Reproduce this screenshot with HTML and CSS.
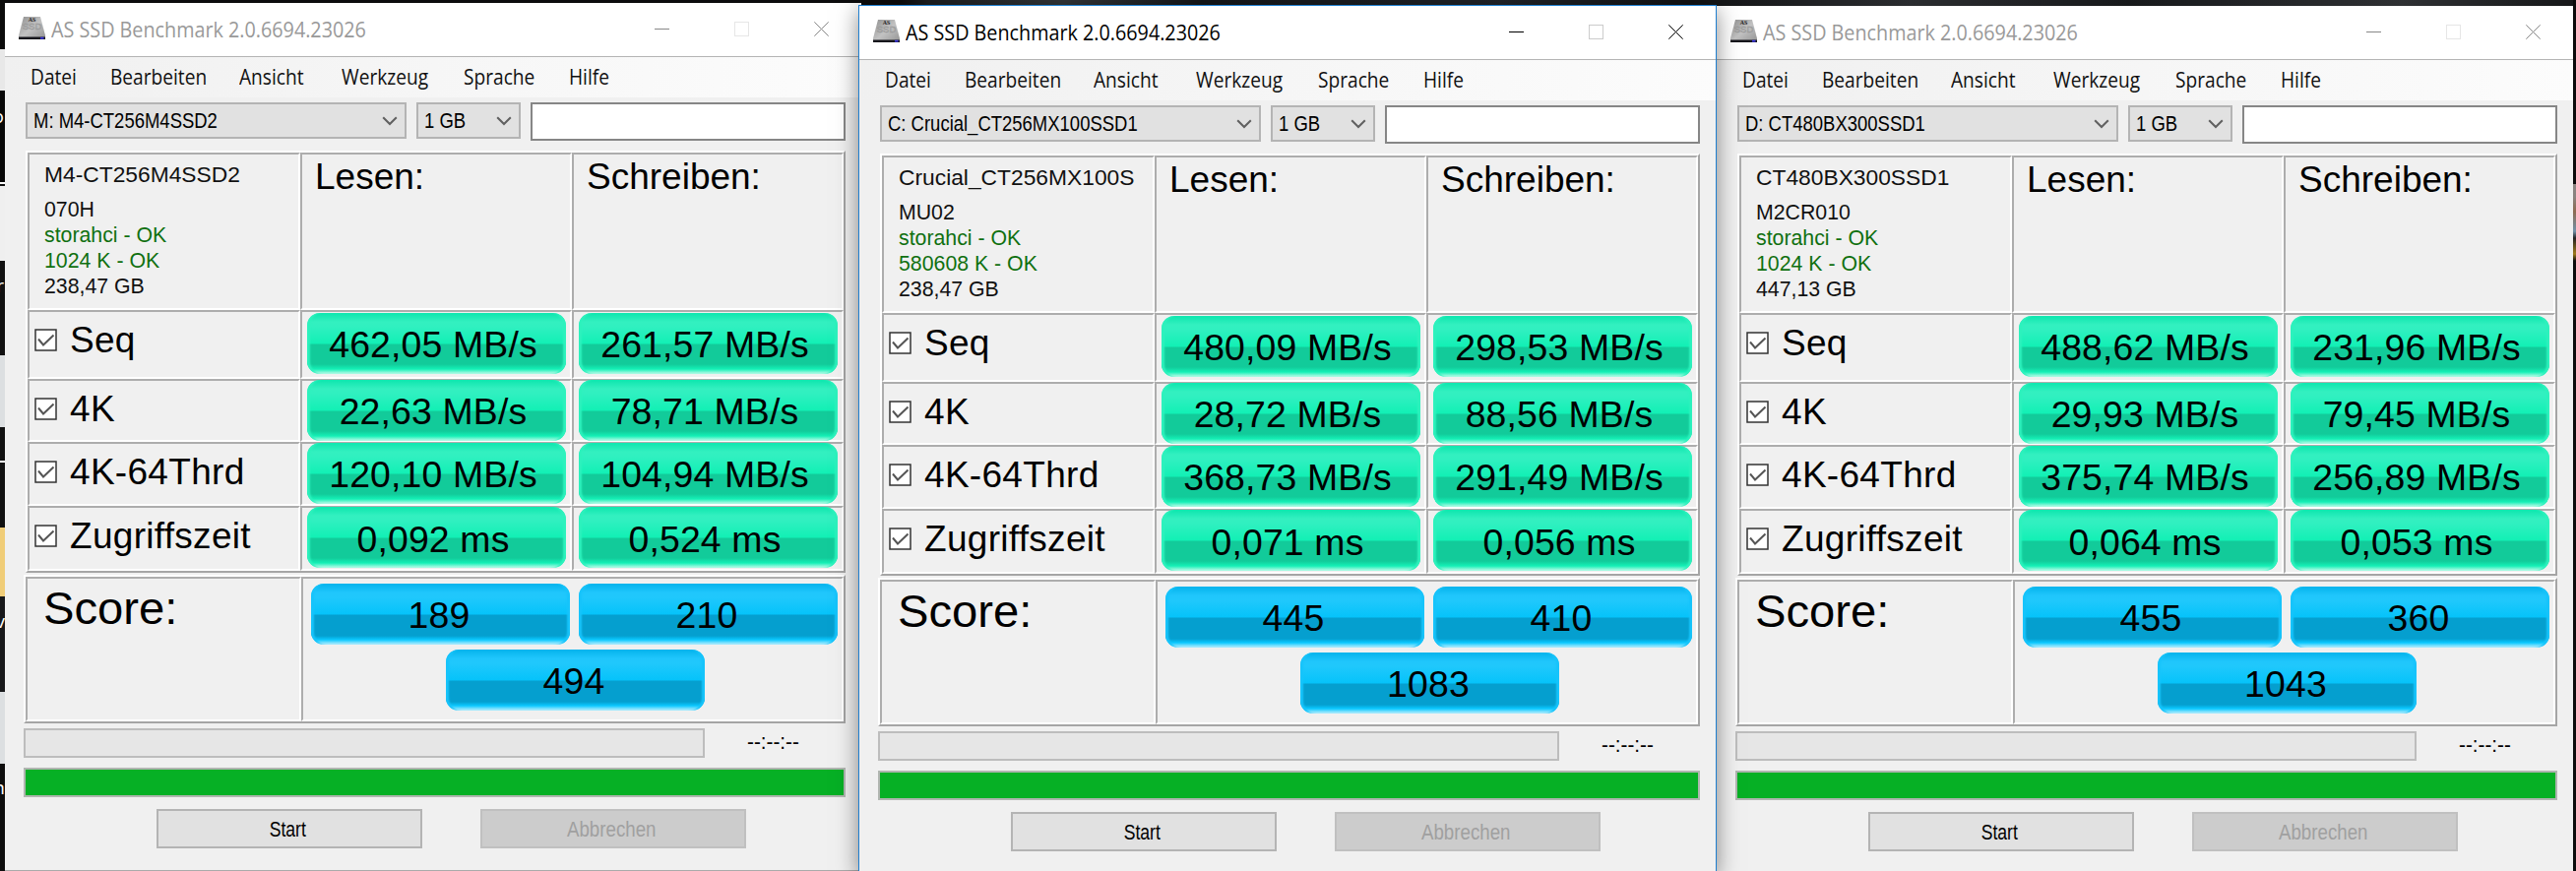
FILE: index.html
```html
<!DOCTYPE html>
<html lang="de">
<head>
<meta charset="utf-8">
<title>AS SSD Benchmark</title>
<link rel="stylesheet" href="styles.css">
</head>
<body>
<svg class="defs" width="0" height="0">
  <defs>
    <linearGradient id="metal" x1="0" y1="0" x2="1" y2="1"><stop offset="0" stop-color="#8f8f8f"/><stop offset=".5" stop-color="#c2c2c2"/><stop offset="1" stop-color="#929292"/></linearGradient>
    <symbol id="drive" viewBox="0 0 27 23">
      <path d="M5 0H22L27 19V23H0V19Z" fill="url(#metal)"/>
      <path d="M0 20.500H27V23H0Z" fill="#17171c"/><path d="M22 20.800h3.500v1.800H22z" fill="#3a35e0"/>
      <text x="13.500" y="4.500" class="drive-as">AS</text><text x="13.500" y="13" class="drive-ssd">SSD</text>
    </symbol>
    <symbol id="chevron" viewBox="0 0 16 10"><path d="M1.200 1.200L8 8L14.800 1.200" fill="none" stroke="#606060" stroke-width="2"/></symbol>
    <symbol id="check" viewBox="0 0 23 23"><rect x="1" y="1" width="21" height="21" fill="#fff" stroke="#333" stroke-width="1.500"/><path d="M4 10.500L9 16.500L19.500 6.500" fill="none" stroke="#555" stroke-width="2"/></symbol>
    <symbol id="controls" viewBox="0 0 182 15"><path class="c-min" d="M0 7.500H15"/><rect class="c-max" x="81.500" y=".5" width="14" height="14"/><path class="c-close" d="M162.300 .3L176.700 14.700M176.700 .3L162.300 14.700"/></symbol>
  </defs>
</svg>
<div class="desktop">
  <div class="strip"><span class="cut c1">o</span><span class="cut c2">r</span><span class="cut c3">v</span><span class="cut c4">n</span></div>
  <div class="strip-right"></div>

  <section class="window first">
    <header class="titlebar"><svg class="drive"><use href="#drive"/></svg><span class="title">AS SSD Benchmark 2.0.6694.23026</span><svg class="controls"><use href="#controls"/></svg></header>
    <nav class="menu"><span>Datei</span><span>Bearbeiten</span><span>Ansicht</span><span>Werkzeug</span><span>Sprache</span><span>Hilfe</span></nav>
    <div class="toolbar">
      <div class="combo"><span>M: M4-CT256M4SSD2</span><svg class="chevron"><use href="#chevron"/></svg></div>
      <div class="combo"><span>1 GB</span><svg class="chevron"><use href="#chevron"/></svg></div>
      <div class="field"></div>
    </div>
    <div class="results">
      <div class="cell info"><p class="model">M4-CT256M4SSD2</p><p>070H</p><p class="ok">storahci - OK</p><p class="ok">1024 K - OK</p><p>238,47 GB</p></div>
      <div class="cell head">Lesen:</div><div class="cell head">Schreiben:</div>
      <div class="cell test"><svg class="check"><use href="#check"/></svg><span>Seq</span></div><div class="cell"><b class="pill">462,05 MB/s</b></div><div class="cell"><b class="pill">261,57 MB/s</b></div>
      <div class="cell test"><svg class="check"><use href="#check"/></svg><span>4K</span></div><div class="cell tight"><b class="pill">22,63 MB/s</b></div><div class="cell tight"><b class="pill">78,71 MB/s</b></div>
      <div class="cell test"><svg class="check"><use href="#check"/></svg><span>4K-64Thrd</span></div><div class="cell tight"><b class="pill">120,10 MB/s</b></div><div class="cell tight"><b class="pill">104,94 MB/s</b></div>
      <div class="cell test"><svg class="check"><use href="#check"/></svg><span>Zugriffszeit</span></div><div class="cell tight"><b class="pill low">0,092 ms</b></div><div class="cell tight"><b class="pill low">0,524 ms</b></div>
    </div>
    <div class="score">
      <div class="cell score-label"><span>Score:</span></div>
      <div class="cell score-values"><b class="pill blue">189</b><b class="pill blue">210</b><b class="pill blue total">494</b></div>
    </div>
    <div class="progress-row"><div class="progress"></div><span class="time">--:--:--</span></div>
    <div class="progress full"></div>
    <div class="buttons"><div class="button"><span class="start">Start</span></div><div class="button disabled"><span>Abbrechen</span></div></div>
  </section>

  <section class="window third">
    <header class="titlebar"><svg class="drive"><use href="#drive"/></svg><span class="title">AS SSD Benchmark 2.0.6694.23026</span><svg class="controls"><use href="#controls"/></svg></header>
    <nav class="menu"><span>Datei</span><span>Bearbeiten</span><span>Ansicht</span><span>Werkzeug</span><span>Sprache</span><span>Hilfe</span></nav>
    <div class="toolbar">
      <div class="combo"><span>D: CT480BX300SSD1</span><svg class="chevron"><use href="#chevron"/></svg></div>
      <div class="combo"><span>1 GB</span><svg class="chevron"><use href="#chevron"/></svg></div>
      <div class="field"></div>
    </div>
    <div class="results">
      <div class="cell info"><p class="model">CT480BX300SSD1</p><p>M2CR010</p><p class="ok">storahci - OK</p><p class="ok">1024 K - OK</p><p>447,13 GB</p></div>
      <div class="cell head">Lesen:</div><div class="cell head">Schreiben:</div>
      <div class="cell test"><svg class="check"><use href="#check"/></svg><span>Seq</span></div><div class="cell"><b class="pill">488,62 MB/s</b></div><div class="cell"><b class="pill">231,96 MB/s</b></div>
      <div class="cell test"><svg class="check"><use href="#check"/></svg><span>4K</span></div><div class="cell tight"><b class="pill">29,93 MB/s</b></div><div class="cell tight"><b class="pill">79,45 MB/s</b></div>
      <div class="cell test"><svg class="check"><use href="#check"/></svg><span>4K-64Thrd</span></div><div class="cell tight"><b class="pill">375,74 MB/s</b></div><div class="cell tight"><b class="pill">256,89 MB/s</b></div>
      <div class="cell test"><svg class="check"><use href="#check"/></svg><span>Zugriffszeit</span></div><div class="cell tight"><b class="pill low">0,064 ms</b></div><div class="cell tight"><b class="pill low">0,053 ms</b></div>
    </div>
    <div class="score">
      <div class="cell score-label"><span>Score:</span></div>
      <div class="cell score-values"><b class="pill blue">455</b><b class="pill blue">360</b><b class="pill blue total">1043</b></div>
    </div>
    <div class="progress-row"><div class="progress"></div><span class="time">--:--:--</span></div>
    <div class="progress full"></div>
    <div class="buttons"><div class="button"><span class="start">Start</span></div><div class="button disabled"><span>Abbrechen</span></div></div>
  </section>

  <section class="window active">
    <header class="titlebar"><svg class="drive"><use href="#drive"/></svg><span class="title">AS SSD Benchmark 2.0.6694.23026</span><svg class="controls"><use href="#controls"/></svg></header>
    <nav class="menu"><span>Datei</span><span>Bearbeiten</span><span>Ansicht</span><span>Werkzeug</span><span>Sprache</span><span>Hilfe</span></nav>
    <div class="toolbar">
      <div class="combo"><span>C: Crucial_CT256MX100SSD1</span><svg class="chevron"><use href="#chevron"/></svg></div>
      <div class="combo"><span>1 GB</span><svg class="chevron"><use href="#chevron"/></svg></div>
      <div class="field"></div>
    </div>
    <div class="results">
      <div class="cell info"><p class="model">Crucial_CT256MX100S</p><p>MU02</p><p class="ok">storahci - OK</p><p class="ok">580608 K - OK</p><p>238,47 GB</p></div>
      <div class="cell head">Lesen:</div><div class="cell head">Schreiben:</div>
      <div class="cell test"><svg class="check"><use href="#check"/></svg><span>Seq</span></div><div class="cell"><b class="pill">480,09 MB/s</b></div><div class="cell"><b class="pill">298,53 MB/s</b></div>
      <div class="cell test"><svg class="check"><use href="#check"/></svg><span>4K</span></div><div class="cell tight"><b class="pill">28,72 MB/s</b></div><div class="cell tight"><b class="pill">88,56 MB/s</b></div>
      <div class="cell test"><svg class="check"><use href="#check"/></svg><span>4K-64Thrd</span></div><div class="cell tight"><b class="pill">368,73 MB/s</b></div><div class="cell tight"><b class="pill">291,49 MB/s</b></div>
      <div class="cell test"><svg class="check"><use href="#check"/></svg><span>Zugriffszeit</span></div><div class="cell tight"><b class="pill low">0,071 ms</b></div><div class="cell tight"><b class="pill low">0,056 ms</b></div>
    </div>
    <div class="score">
      <div class="cell score-label"><span>Score:</span></div>
      <div class="cell score-values"><b class="pill blue">445</b><b class="pill blue">410</b><b class="pill blue total">1083</b></div>
    </div>
    <div class="progress-row"><div class="progress"></div><span class="time">--:--:--</span></div>
    <div class="progress full"></div>
    <div class="buttons"><div class="button"><span class="start">Start</span></div><div class="button disabled"><span>Abbrechen</span></div></div>
  </section>
</div>
</body>
</html>
```
FILE: styles.css
```css
* { box-sizing: border-box; }
body { margin: 0; }
p { margin: 0; }
.defs { position: absolute; }
.desktop {
  position: relative; width: 2617px; height: 885px; overflow: hidden;
  background: linear-gradient(100deg, #0c0c0d 0 33%, #1d1f21 34%, #34373a 39%, #15171a 44%, #22252a 55%, #121315 62%, #2a2c2f 70%, #17191b 78%, #2e3033 88%, #101112 96%);
  font-family: "Liberation Sans", Arial, sans-serif; color: #000;
}
.strip {
  position: absolute; left: 0; top: 0; width: 5px; height: 885px; overflow: hidden;
  background: linear-gradient(#0b0b0b 0 50px, #e8e8e8 50px 92px, #080808 92px 185px, #fff 185px 187px, #111 187px 189px, #efefef 189px 265px, #111 265px 361px, #dcdfe1 361px 434px, #111 434px 468px, #fff 468px 470px, #111 470px 536px, #f0cd78 536px 606px, #17181a 606px 703px, #dcdfe1 703px 776px, #0d0d0d 776px);
}
.strip-right {
  position: absolute; right: 0; top: 0; width: 3px; height: 885px;
  background: linear-gradient(#0b0b0b 0 187px, #8a8380 187px 200px, #8d6a50 215px, #7191a8 235px, #222 242px, #a07a1c 258px, #0c0c0c 265px);
}
.cut { position: absolute; right: 1px; color: #fff; font: 19px/20px "Open Sans", sans-serif; }
.c1 { top: 108px; } .c2 { top: 280px; } .c3 { top: 621px; right: 0; } .c4 { top: 790px; right: 0; }

.window { position: absolute; width: 870px; height: 882px; background: #f0f0f0; border-bottom: 1px solid #aaa; }
.first { left: 5px; top: 3px; }
.third { left: 1744px; top: 6px; }
.active { left: 873px; top: 6px; box-shadow: 0 0 0 1px #1f7fd0, 0 4px 22px rgba(0, 0, 0, .5); }

.titlebar { display: flex; height: 55px; background: #fff; border-bottom: 1px solid #b4b4b4; padding-left: 14px; }
.active .titlebar, .third .titlebar { padding-left: 14px; }
.drive { width: 27px; height: 23px; margin: 14px 6px 0 0; flex: none; }
.drive-as { font: bold 6px "Liberation Serif", serif; text-anchor: middle; fill: #222; }
.drive-ssd { font: 9.500px "Liberation Sans", sans-serif; text-anchor: middle; fill: none; stroke: #969696; stroke-width: .5px; }
.title { width: 613px; font: 21.500px/30px "Open Sans", sans-serif; color: #999; padding-top: 12px; white-space: nowrap; transform: scaleX(.919); transform-origin: 0 0; }
.active .title { color: #000; }
.controls { width: 182px; height: 15px; margin-top: 19px; flex: none; fill: none; --ink: #888; --max: #e6e6e6; }
.active .controls { --ink: #000; --max: #ccc; }
.c-min, .c-close { stroke: var(--ink); }
.c-max { stroke: var(--max); }

.menu {
  display: grid; grid-template-columns: 81px 131px 104px 124px 107px 100px; height: 41px; padding-left: 26px;
  background: linear-gradient(90deg, #f0f0f0, #fcfcfc); font: 21.500px/40px "Open Sans", sans-serif; color: #111;
}
.menu span { transform: scaleX(.89); transform-origin: 0 0; white-space: nowrap; }
.toolbar { display: grid; grid-template-columns: 387px 106px 320px; column-gap: 10px; padding: 5px 0 0 21px; height: 54px; }
.combo { display: flex; justify-content: space-between; height: 37px; background: #e1e1e1; border: 2px solid #b4b4b4; padding: 0 7px 0 6px; font-size: 22px; line-height: 33px; white-space: nowrap; }
.combo span { transform: scaleX(.84); transform-origin: 0 0; width: 0; }
.chevron { width: 16px; height: 10px; margin-top: 12px; flex: none; }
.field { height: 39px; background: #fff; border: 2px solid #868686; }

.results, .score { display: grid; border: 2px solid; border-color: #fff #a5a5a5 #a5a5a5 #fff; }
.results { grid-template: 160px 70px 64px 65px 66px / 277px 276px 276px; width: 833px; margin-left: 21px; }
.cell { border: 2px solid; border-color: #adadad #fff #fff #adadad; min-width: 0; padding: 1px 0 0 5px; }
.info { padding: 5px 0 0 15px; font-size: 21.300px; line-height: 26px; color: #111; white-space: nowrap; }
.model { font-size: 22.800px; line-height: 30px; margin-bottom: 8px; }
.ok { color: #107010; }
.head { padding: 2px 0 0 13px; font-size: 37px; line-height: 42px; }
.test { display: flex; padding: 8px 0 0 5px; font-size: 37px; line-height: 42px; letter-spacing: .3px; }
.check { width: 23px; height: 23px; margin: 9px 13px 0 0; flex: none; }
.pill {
  display: block; width: 263px; height: 62px; padding-right: 7px; border-radius: 13px; font-weight: normal;
  font-size: 37.400px; line-height: 65px; letter-spacing: .15px; text-align: center; white-space: nowrap;
  background: linear-gradient(#0de6ae 0, #33f0c0 9px, #30f0c0 14px, #12f0b5 31px, #12cb9a 32px, #12cb9a 52px, #14f0b6 57px, #c5fbeb 62px);
  box-shadow: inset 4px 0 2px -1px #2df2bd, inset -4px 0 2px -1px #2df2bd;
}
.tight { padding-top: 0; }
.tight .pill { margin-top: -1px; }
.tight .low { line-height: 66px; }
.score { grid-template: 147px / 280px 551px; width: 835px; margin: 2px 0 0 19px; }
.score-label { padding: 2px 0 0 16px; font-size: 46px; line-height: 56px; }
.score-label span { display: inline-block; transform: scaleX(1.025); transform-origin: 0 0; }
.score-values { display: grid; grid-template-columns: 263px 263px; gap: 5px 9px; padding: 5px 0 0 8px; align-content: start; }
.blue {
  padding-right: 3px;
  background: linear-gradient(#04b3ec 0, #20c6fc 9px, #20c8fc 14px, #06c3fa 31px, #059fcf 32px, #059fcf 53px, #0ac8ff 57px, #c2f0fd 62px);
  box-shadow: inset 4px 0 2px -1px #17c4fb, inset -4px 0 2px -1px #17c4fb;
}
.total { grid-column: 1 / 3; margin-left: 137px; }

.progress-row { display: flex; margin: 5px 0 0 19px; height: 40px; }
.progress { width: 692px; height: 30px; background: #e6e6e6; border: 2px solid #bdbdbd; }
.time { margin-left: 43px; font-size: 22px; line-height: 28px; transform: scaleX(.94); transform-origin: 0 0; }
.full { width: 835px; margin-left: 19px; background: #06b025; border-color: #b0b5b0; }
.buttons { display: flex; gap: 59px; padding: 12px 0 0 154px; }
.button { width: 270px; height: 40px; border: 2px solid #b4b4b4; background: #e1e1e1; text-align: center; font-size: 22px; line-height: 38px; }
.button span { display: inline-block; transform: translateX(-2px) scaleX(.85); }
.button .start { transform: translateX(-2px) scaleX(.8); }
.disabled { background: #ccc; border-color: #c0c0c0; color: #a0a0a0; }
```
